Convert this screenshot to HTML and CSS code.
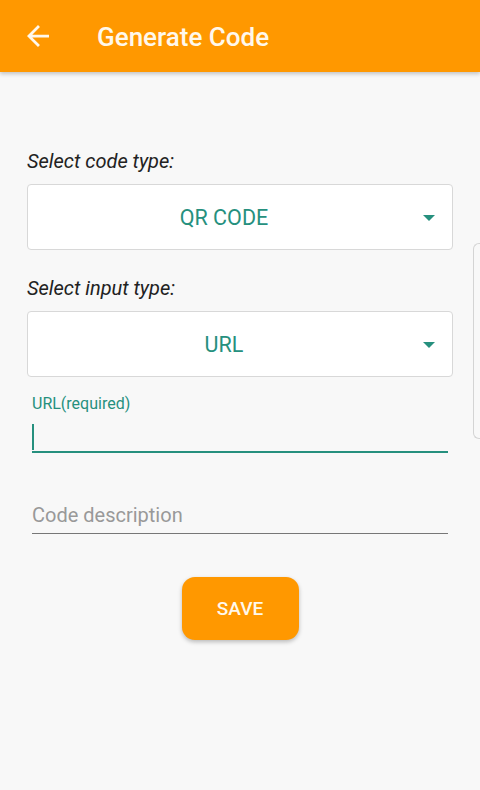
FILE: index.html
```html
<!DOCTYPE html>
<html lang="en">
<head>
    <meta charset="UTF-8">
    <meta name="viewport" content="width=device-width, initial-scale=1.0">
    <title>Generate Code</title>
    <link rel="stylesheet" href="styles.css">
</head>
<body>
    <div class="app-bar">
        <svg class="back-icon" viewBox="4 4 16 16" width="22" height="22">
            <path d="M20 11H7.83l5.59-5.59L12 4l-8 8 8 8 1.41-1.41L7.83 13H20v-2z" fill="#fff8ec"/>
        </svg>
        <span class="app-title">Generate Code</span>
    </div>

    <div class="form">
        <div class="select-label">Select code type:</div>
        <div class="dropdown">
            <span class="dropdown-value">QR CODE</span>
            <svg class="dropdown-arrow" viewBox="0 0 12 6" width="12" height="6">
                <path d="M0 0h12L6 6z" fill="#26907e"/>
            </svg>
        </div>

        <div class="select-label label-second">Select input type:</div>
        <div class="dropdown">
            <span class="dropdown-value">URL</span>
            <svg class="dropdown-arrow" viewBox="0 0 12 6" width="12" height="6">
                <path d="M0 0h12L6 6z" fill="#26907e"/>
            </svg>
        </div>

        <div class="text-field focused">
            <div class="field-label">URL(required)</div>
            <div class="field-input"><span class="caret"></span></div>
        </div>

        <div class="text-field">
            <div class="field-label"></div>
            <div class="field-input"><span class="placeholder">Code description</span></div>
        </div>

        <div class="button-wrapper">
            <button class="save-btn">SAVE</button>
        </div>
    </div>

    <!-- edge panel handle -->
    <div class="edge-handle"></div>
</body>
</html>
```

FILE: styles.css
```css
body {
    margin: 0;
    background: #f8f8f8;
    font-family: Roboto, "Liberation Sans", sans-serif;
    height: 790px;
    overflow: hidden;
    position: relative;
}

.app-bar {
    height: 72px;
    background: #ff9800;
    display: flex;
    align-items: center;
    padding-left: 27px;
    box-shadow: 0 2px 4px rgba(0, 0, 0, 0.22);
}

.back-icon {
    display: block;
}

.app-title {
    margin-left: 48px;
    margin-top: 2px;
    color: #fff8ec;
    font-size: 26px;
    font-weight: 500;
}

.form {
    padding: 76px 27px 0 27px;
}

.select-label {
    font-style: italic;
    font-size: 20px;
    line-height: 26px;
    color: #222;
}

.label-second {
    margin-top: 25px;
}

.dropdown {
    margin-top: 10px;
    height: 64px;
    background: #fff;
    border: 1px solid #d8d8d8;
    border-radius: 4px;
    display: flex;
    align-items: center;
    padding-right: 17px;
}

.dropdown-value {
    flex: 1;
    text-align: center;
    font-size: 21.5px;
    color: #26907e;
    padding-right: 3px;
}

.dropdown-arrow {
    display: block;
    margin-top: 1px;
}

.text-field {
    margin: 15px 5px 0 5px;
}

.text-field + .text-field {
    margin-top: 22px;
}

.field-label {
    height: 18px;
    font-size: 16px;
    line-height: 23px;
    color: #26907e;
}

.field-input {
    height: 40px;
    border-bottom: 1px solid #777;
    display: flex;
    align-items: center;
}

.focused .field-input {
    height: 41px;
    border-bottom: 2px solid #26907e;
}

.caret {
    width: 2px;
    height: 26px;
    margin-top: 12px;
    background: #26907e;
}

.placeholder {
    font-size: 20px;
    color: #999;
    margin-top: 4px;
}

.button-wrapper {
    display: flex;
    justify-content: center;
    margin-top: 43px;
}

.save-btn {
    width: 117px;
    height: 63px;
    border: none;
    border-radius: 13px;
    background: #ff9800;
    color: #fff8ec;
    font-family: Roboto, "Liberation Sans", sans-serif;
    font-size: 19px;
    font-weight: 500;
    box-shadow: 0 2px 4px rgba(0, 0, 0, 0.25);
}

.edge-handle {
    position: absolute;
    right: 0;
    top: 243px;
    width: 6px;
    height: 194px;
    border: 1px solid #d4d4d4;
    border-right: none;
    border-radius: 6px 0 0 6px;
}
```
